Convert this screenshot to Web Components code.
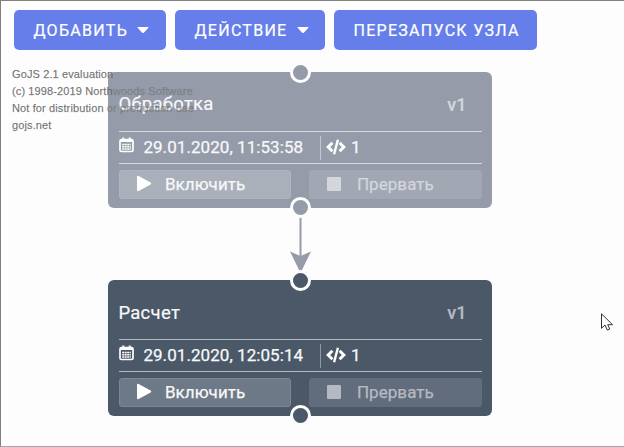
<!DOCTYPE html>
<html lang="ru"><head><meta charset="utf-8"><title>Схема</title>
<style>
html,body{margin:0;height:100%;background:#fdfdfd;overflow:hidden}
body{font-family:Roboto,"Liberation Sans",sans-serif}
</style></head><body>
<flow-editor>
<tool-button slot="tools" menu style="width:152px">ДОБАВИТЬ</tool-button>
<tool-button slot="tools" menu style="width:150px">ДЕЙСТВИЕ</tool-button>
<tool-button slot="tools" style="width:203px">ПЕРЕЗАПУСК УЗЛА</tool-button>
<water-mark></water-mark>
<flow-link></flow-link>
<flow-node style="left:108.4px;top:71.5px;--bg:#959ba9;--on:#a9b0ba;--off:#a1a7b3;--edge:#b0b6c0;--dim:#d3d6dc;--rule:#d5d8dd;--sep:#c3c7ce"><span slot="title">Обработка</span><span slot="version">v1</span><span slot="date">29.01.2020, 11:53:58</span><span slot="count">1</span></flow-node>
<flow-node style="left:108.4px;top:279.9px;--bg:#4a5868;--on:#6e7987;--off:#616d7c;--edge:#7c8794;--dim:#b5bac2;--rule:#b4bac2;--sep:#9299a3"><span slot="title">Расчет</span><span slot="version">v1</span><span slot="date">29.01.2020, 12:05:14</span><span slot="count">1</span></flow-node>
<mouse-pointer></mouse-pointer>
</flow-editor>
<script>
const define=(name,html)=>customElements.define(name,class extends HTMLElement{
constructor(){super();const t=document.createElement('template');t.innerHTML=html;this.attachShadow({mode:'open'}).append(t.content.cloneNode(true));}});

define('flow-editor',`<style>
:host{display:block;position:relative;box-sizing:border-box;width:624px;height:447px;border:solid #808080;border-width:1px 0 0 1px;border-bottom:1px solid #a6a6a6;overflow:hidden}
nav{display:flex;gap:9px;padding:9px 0 0 13px}
.canvas{position:absolute;left:-1px;top:-1px;width:624px;height:447px}
</style><nav><slot name="tools"></slot></nav><div class="canvas"><slot></slot></div>`);

define('tool-button',`<style>
:host{display:flex;box-sizing:border-box;height:40px;align-items:center;gap:9px;padding-left:19.5px;border-radius:5px;background:#667eea;color:#fff;font-size:16px;letter-spacing:1.28px;white-space:nowrap;-webkit-text-stroke:.2px #fff}
svg{display:none}:host([menu]) svg{display:block}
</style><slot></slot><svg width="12" height="8" viewBox="0 0 12 8"><path d="M1 1H11Q12 1 11.2 2L6.8 6.7Q6 7.4 5.2 6.7L.8 2Q0 1 1 1Z" fill="#fff"/></svg>`);

define('water-mark',`<style>
:host{position:absolute;left:12px;top:66px;z-index:3;font:11px/17px "Liberation Sans",Arial,sans-serif;letter-spacing:.12px;color:rgba(100,100,100,.9);-webkit-text-stroke:.25px rgba(110,110,110,.6);white-space:nowrap;pointer-events:none}
div{height:17px}.fade{color:rgba(122,122,122,.7)}
</style><div>GoJS 2.1 evaluation</div><div>(c) 1998-2019 North<span class="fade">woods Software</span></div><div>Not for distribution <span class="fade">or production use</span></div><div>gojs.net</div>`);

define('flow-link',`<style>:host{position:absolute;left:285px;top:208px}svg{display:block}</style>
<svg width="32" height="72"><path d="M15.5 9V52" stroke="#959ba9" stroke-width="2"/><path d="M5 43.5L15.5 48L26 43.5L15.5 65Z" fill="#959ba9"/></svg>`);

define('flow-node',`<style>
:host{position:absolute;box-sizing:border-box;width:384px;height:136px;padding:0 10.5px;border-radius:6px;background:var(--bg);color:#f8f8f9;font-size:17px;z-index:1;white-space:nowrap}
header{display:flex;justify-content:space-between;align-items:center;height:59.5px;padding:6px 15px 0 0;box-sizing:border-box;font-size:18.5px;letter-spacing:.28px;margin-left:-.5px;-webkit-text-stroke:.2px currentColor}
.version{color:var(--dim);font-size:18px;font-weight:500;-webkit-text-stroke:.2px currentColor}
.info{display:flex;align-items:center;height:33px;box-sizing:border-box;border-top:1px solid var(--rule);border-bottom:1px solid var(--rule);padding-bottom:2px;-webkit-text-stroke:.25px currentColor}
.date{display:block;width:176.5px;margin-left:9.5px;letter-spacing:.06px}
.sep{width:1px;height:24px;background:var(--sep);margin:2px 5px 0 0}
.code{margin-right:5px}
.actions{display:flex;gap:18px;margin-top:6px;-webkit-text-stroke:.25px currentColor}
.act{flex:1;display:flex;align-items:center;box-sizing:border-box;height:29px;border:1px solid var(--edge);border-radius:3px;background:var(--on);padding:0 0 2px 17px;letter-spacing:.06px}
.act svg{margin-right:13px}
.off{background:var(--off);border-color:var(--off);color:var(--dim)}
.off svg{margin-right:15.5px}
.port{position:absolute;left:181.5px;width:15px;height:15px;border:3px solid #fdfdfd;border-radius:50%;background:var(--bg)}
.top{top:-10px}.bottom{bottom:-10px}
svg{display:block;flex:none}
</style>
<header><slot name="title"></slot><span class="version"><slot name="version"></slot></span></header>
<div class="info"><svg style="margin-top:-4px" width="15" height="16" viewBox="0 0 15 16"><path d="M2.5 2.5H12.5Q14 2.5 14 4V13.3Q14 14.5 12.5 14.5H2.5Q1 14.5 1 13.3V4Q1 2.5 2.5 2.5Z" fill="none" stroke="#fff" stroke-width="1.7"/><path d="M1 4H14M4.3 .5V4M10.7 .5V4" stroke="#fff" stroke-width="2"/><path d="M3.2 7.5H11.8M3.2 9.8H11.8M3.2 12H11.8" stroke="#fff" stroke-width="1.6" stroke-dasharray="2 .5"/></svg>
<span class="date"><slot name="date"></slot></span><i class="sep"></i><svg class="code" width="20" height="16" viewBox="0 0 20 16"><path d="M6.4 3.8L2.2 8L6.4 12.2M13.6 3.8L17.8 8L13.6 12.2" fill="none" stroke="#fff" stroke-width="3"/><path d="M11.9 .8L8.1 15.2" stroke="#fff" stroke-width="2.4"/></svg><slot name="count"></slot></div>
<div class="actions"><div class="act"><svg width="15" height="17" viewBox="0 0 15 17"><path d="M0 2Q0 .3 1.6 1.1L13.6 7.6Q15 8.5 13.6 9.4L1.6 15.9Q0 16.7 0 15Z" fill="#fff"/></svg>Включить</div><div class="act off"><svg width="14" height="14"><rect width="14" height="14" rx="1" fill="currentColor"/></svg>Прервать</div></div>
<i class="port top"></i><i class="port bottom"></i>`);

define('mouse-pointer',`<style>:host{position:absolute;left:601px;top:313px;z-index:4}svg{display:block}</style>
<svg width="13" height="19"><path d="M.5 .8V15.3L4 12L6.3 17.1L8.8 16L6.7 11.7H11.5Z" fill="#fff" stroke="#303038"/></svg>`);
</script></body></html>
